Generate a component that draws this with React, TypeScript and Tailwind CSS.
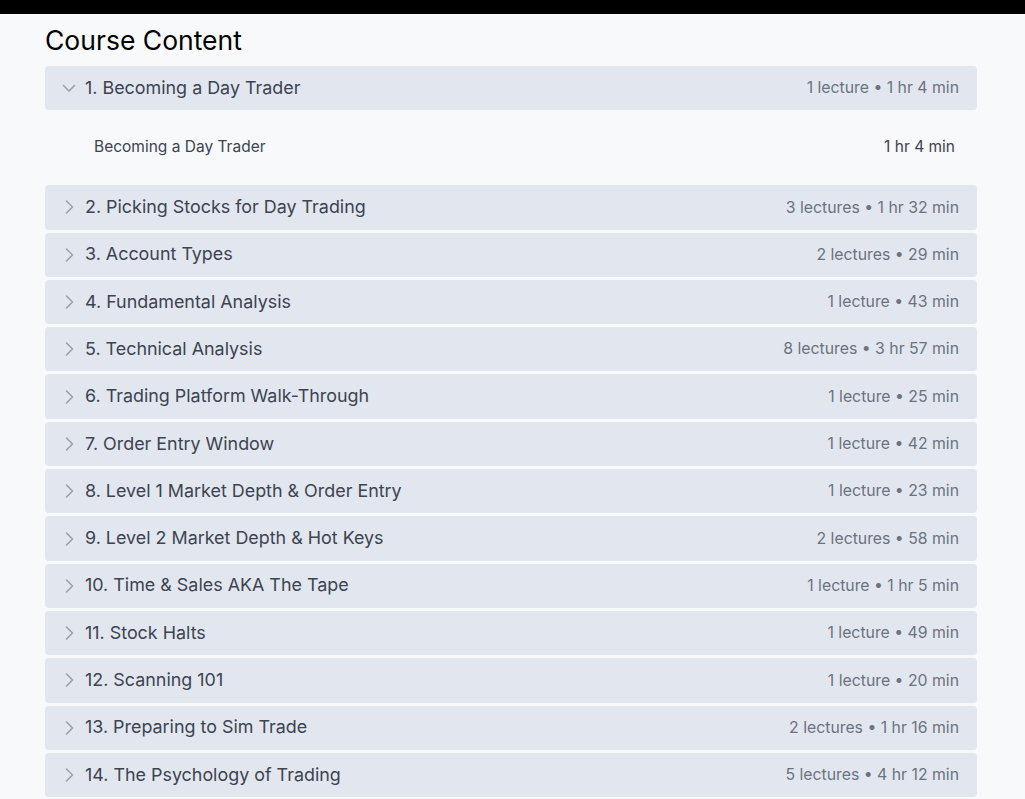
import React from "react";

const sections = [
  { t: "1. Becoming a Day Trader", m: "1 lecture • 1 hr 4 min", open: true },
  { t: "2. Picking Stocks for Day Trading", m: "3 lectures • 1 hr 32 min" },
  { t: "3. Account Types", m: "2 lectures • 29 min" },
  { t: "4. Fundamental Analysis", m: "1 lecture • 43 min" },
  { t: "5. Technical Analysis", m: "8 lectures • 3 hr 57 min" },
  { t: "6. Trading Platform Walk-Through", m: "1 lecture • 25 min" },
  { t: "7. Order Entry Window", m: "1 lecture • 42 min" },
  { t: "8. Level 1 Market Depth & Order Entry", m: "1 lecture • 23 min" },
  { t: "9. Level 2 Market Depth & Hot Keys", m: "2 lectures • 58 min" },
  { t: "10. Time & Sales AKA The Tape", m: "1 lecture • 1 hr 5 min" },
  { t: "11. Stock Halts", m: "1 lecture • 49 min" },
  { t: "12. Scanning 101", m: "1 lecture • 20 min" },
  { t: "13. Preparing to Sim Trade", m: "2 lectures • 1 hr 16 min" },
  { t: "14. The Psychology of Trading", m: "5 lectures • 4 hr 12 min" },
];

function Chevron({ open }: { open?: boolean }) {
  return (
    <svg width="14" height="14" viewBox="0 0 14 14" fill="none" stroke="#9aa1ab" strokeWidth="1.6" strokeLinecap="round" strokeLinejoin="round" className="shrink-0">
      {open ? <path d="M1.5 4.5L7 10l5.5-5.5" /> : <path d="M4.5 1L10.5 7l-6 6" />}
    </svg>
  );
}

export default function App() {
  return (
    <div className="min-h-[799px] bg-[#f8f9fb]" style={{ fontFamily: "Inter, 'Noto Sans', sans-serif" }}>
      <div className="h-[14px] bg-black" />
      <div className="pl-[45px] pr-[48px]">
        <h1 className="text-[26.5px] leading-[50px] text-black font-normal mt-[1px]">Course Content</h1>
        <div className="flex flex-col gap-[3px] mt-[1px]">
          {sections.map((s, i) => (
            <div key={i}>
              <div className="h-[44.3px] bg-[#e2e7ef] rounded-[4px] flex items-center pl-[17px] pr-[18px]">
                <div className="flex items-center gap-[9px]">
                  <Chevron open={s.open} />
                  <span className="text-[17.9px] text-[#3d4351]">{s.t}</span>
                </div>
                <span className="ml-auto text-[15.8px] text-[#6b7280]">{s.m}</span>
              </div>
              {s.open && (
                <div className="h-[72px] flex items-center pl-[49px] pr-[22px]">
                  <span className="text-[15.5px] text-[#3d4351]">Becoming a Day Trader</span>
                  <span className="ml-auto text-[15.5px] text-[#3d4351]">1 hr 4 min</span>
                </div>
              )}
            </div>
          ))}
        </div>
      </div>
    </div>
  );
}
